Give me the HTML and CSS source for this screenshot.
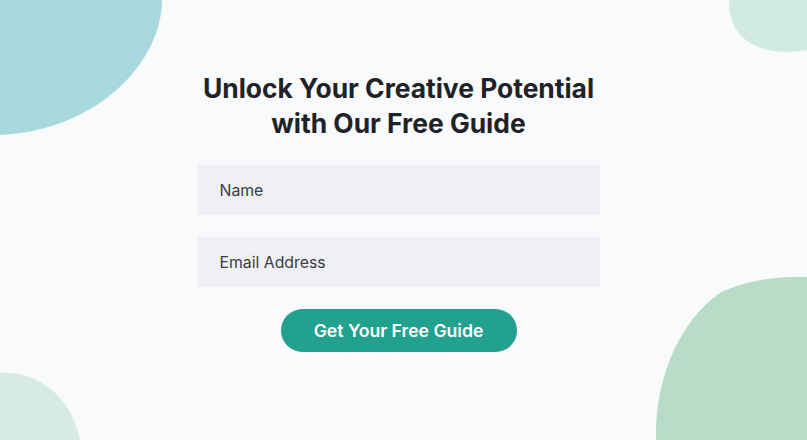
FILE: index.html
```html
<!DOCTYPE html>
<html lang="en">
<head>
<meta charset="utf-8">
<title>Free Guide</title>
<link rel="stylesheet" href="styles.css">
</head>
<body>
<svg class="blobs" width="807" height="440" viewBox="0 0 807 440" aria-hidden="true">
  <path d="M0,0 L162,0 C162,60 100,130 0,135 Z" fill="#a8d8dc"/>
  <path d="M729,0 C728,40 760,58 807,50 L807,0 Z" fill="#d1eae4"/>
  <path d="M656,440 C654,380 680,320 720,293 C745,280 780,276 807,277 L807,440 Z" fill="#b9dcc9"/>
  <path d="M0,373 C30,370 70,390 80,440 L0,440 Z" fill="#d5ebe4"/>
</svg>
<main class="page">
  <h1 class="title">Unlock Your Creative Potential<br>with Our Free Guide</h1>
  <form class="form">
    <input class="field" type="text" placeholder="Name">
    <input class="field" type="email" placeholder="Email Address">
    <button class="cta" type="button">Get Your Free Guide</button>
  </form>
</main>
</body>
</html>
```

FILE: styles.css
```css
* { box-sizing: border-box; }
html, body {
  margin: 0;
  padding: 0;
  width: 807px;
  height: 440px;
  overflow: hidden;
  background: #f8fafb;
  font-family: Inter, "Noto Sans", "Liberation Sans", sans-serif;
}
.blobs {
  position: absolute;
  left: 0;
  top: 0;
  z-index: 0;
}
.page {
  position: relative;
  z-index: 1;
  display: flex;
  flex-direction: column;
  align-items: center;
  padding-top: 71px;
  padding-right: 10px;
}
.title {
  margin: 0;
  font-size: 26.4px;
  line-height: 35px;
  font-weight: 700;
  color: #1f2227;
  text-align: center;
  letter-spacing: 0;
}
.form {
  display: flex;
  flex-direction: column;
  align-items: center;
  gap: 22px;
  margin-top: 24px;
}
.field {
  width: 402px;
  height: 50px;
  border: none;
  border-radius: 1px;
  background: #eef0f3;
  padding: 0 22px;
  font-family: inherit;
  font-size: 15.8px;
  color: #33363b;
  outline: none;
}
.field::placeholder {
  color: #3a3d42;
  opacity: 1;
}
.cta {
  width: 236px;
  height: 43px;
  border: none;
  border-radius: 22px;
  background: #22a18f;
  color: #ffffff;
  font-family: inherit;
  font-size: 17.6px;
  font-weight: 600;
  cursor: pointer;
}
```
